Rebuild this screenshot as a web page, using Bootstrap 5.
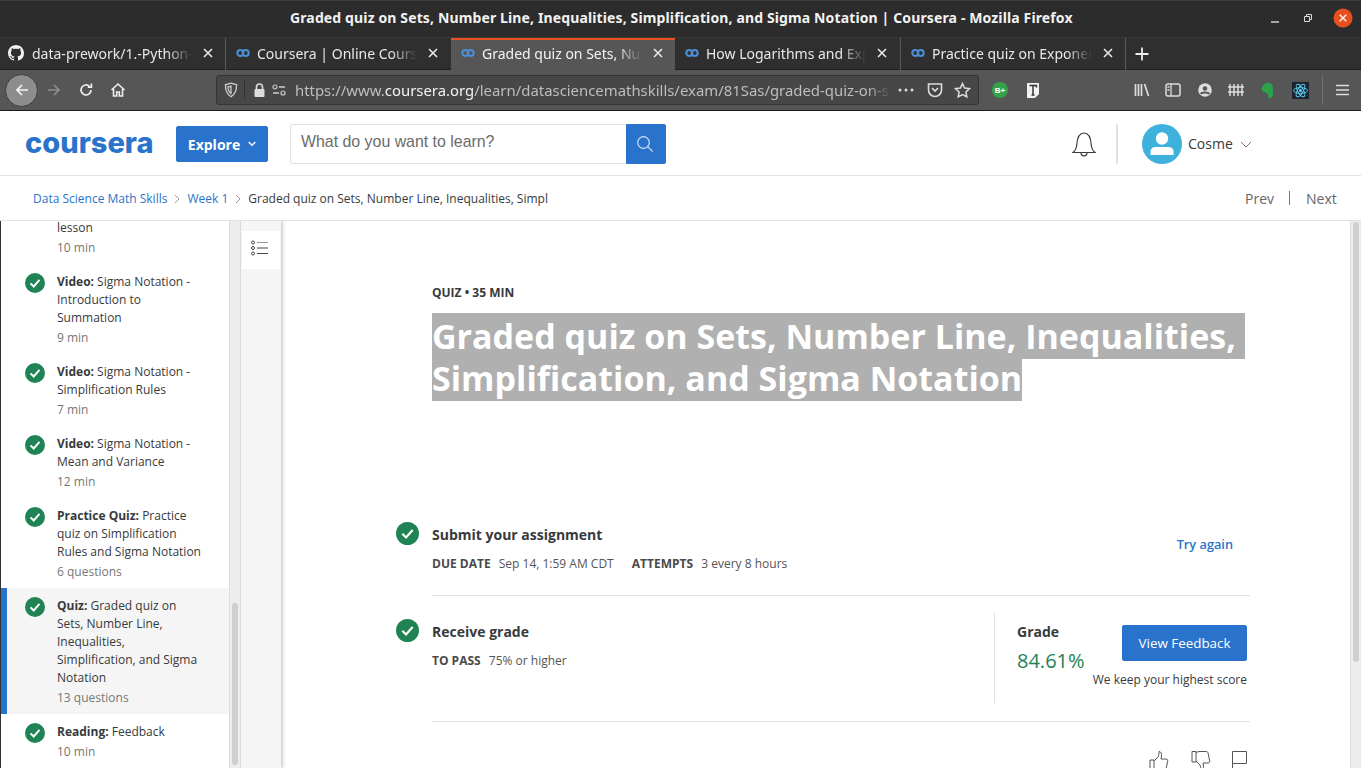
<!DOCTYPE html>
<html lang="en">
<head>
  <meta charset="utf-8"/>
  <title>Graded quiz on Sets, Number Line, Inequalities, Simplification, and Sigma Notation | Coursera</title>
  <link href="https://cdn.jsdelivr.net/npm/bootstrap@5.3.0/dist/css/bootstrap.min.css" rel="stylesheet"/>
  <style>
    html, body { height: 768px; overflow: hidden; }
    body { font-family: "Open Sans", sans-serif; color: #373a3c; background: #fff; }
    svg { display: block; flex: none; }

    /* firefox chrome */
    .ff-title { height: 37px; padding-bottom: 3px; background: #2c2c2c; border-top: 1px solid #3c3c3c; color: #f2f2f2; font: 700 14px "Noto Sans", sans-serif; }
    .ff-title-text { width: 782px; margin-left: 290px; white-space: nowrap; letter-spacing: .13px; flex: none; }
    .win-min { margin-left: 198px; }
    .win-max { margin-left: 23px; }
    .win-close { margin-left: 20px; }
    .ff-tabs { height: 33px; background: #2f2f2f; border-top: 1px solid #3a3a3a; border-bottom: 1px solid #1f1f1f; color: #e8e8e8; font: 400 14px "Noto Sans", sans-serif; }
    .ff-tab { width: 225px; height: 32px; padding: 0 0 2px 10px; flex: none; }
    .ff-tab.is-first { padding-left: 8px; }
    .ff-tab + .ff-tab { border-left: 1px solid #5a5a5a; }
    .ff-tab.is-active { background: #565656; border-top: 2px solid #e8501f; border-left: 0; color: #f4f4f4; margin-left: 1px; width: 224px; padding-bottom: 4px; }
    .ff-tab.is-active + .ff-tab { border-left: 0; }
    .ff-tab-name { width: 160px; margin-left: 7px; overflow: hidden; white-space: nowrap; -webkit-mask-image: linear-gradient(90deg, #000 84%, transparent); mask-image: linear-gradient(90deg, #000 84%, transparent); }
    .is-first .ff-tab-name { margin-left: 8px; }
    .ff-tab-close { margin-left: 10px; }
    .ff-plus { width: 32px; height: 32px; border-left: 1px solid #5a5a5a; justify-content: center; }
    .ff-tools { height: 41px; background: #565656; border-bottom: 1px solid #1c1c1c; padding-left: 5px; }
    .ff-back { width: 33px; height: 33px; border-radius: 50%; background: #8d8d8d; border: 1px solid #3e3e3e; justify-content: center; }
    .ff-slot { width: 32px; justify-content: center; }
    .ff-url { width: 763px; height: 30px; margin-left: 82px; background: #474747; border: 1px solid #343434; border-radius: 3px; color: #bdbdbd; font: 400 14.9px "Noto Sans", sans-serif; }
    .ff-url b { font-weight: 400; color: #f2f2f2; }
    .ff-url-text { width: 596px; overflow: hidden; white-space: nowrap; margin-left: 9px; -webkit-mask-image: linear-gradient(90deg, #000 96%, transparent); mask-image: linear-gradient(90deg, #000 96%, transparent); }
    .ff-url-sep { width: 1px; height: 20px; background: #333; margin: 0 7px 0 6px; }
    .ff-vsep { width: 1px; height: 30px; background: #707070; margin: 0 13px 0 13px; }
    .url-shield { margin-left: 7px; }
    .url-lock { margin-left: 1px; }
    .url-perm { margin-left: 6px; }
    .url-dots { margin-left: 7px; }
    .url-pocket { margin-left: 13px; }
    .url-star { margin-left: 11px; }
    .ext-bplus { margin-left: 13px; }
    .ext-t { margin-left: 18px; }
    .tb-library { margin-left: 94px; }
    .tb-sidebar { margin-left: 15px; }
    .tb-account { margin-left: 17px; }
    .tb-grid { margin-left: 16px; }
    .tb-note { margin-left: 16px; }
    .tb-react { margin-left: 17px; }

    /* coursera header */
    .site-head { height: 65px; border-bottom: 1px solid #e1e1e1; padding: 2px 0 0 25px; }
    .site-logo { width: 151px; color: #2a73cc; font: 800 29px/1 Inter, sans-serif; letter-spacing: 0; padding-bottom: 4px; }
    .btn-explore { width: 92px; height: 36px; padding: 0; background: #2a73cc; border-color: #2a73cc; border-radius: 2px; font-size: 14px; font-weight: 700; color: #fff; }
    .site-search { width: 376px; height: 40px; margin-left: 22px; flex: none; }
    .site-search .form-control { height: 40px; border: 1px solid #e1e1e1; border-radius: 2px 0 0 2px; padding: 0 10px 5px; font: 400 15.9px "Liberation Sans", sans-serif; color: #555; box-shadow: none; }
    .site-search .form-control::placeholder { color: #6b6b6b; opacity: 1; }
    .site-search .btn { width: 40px; padding: 0 2px 0 0; background: #2a73cc; border-color: #2a73cc; border-radius: 0 2px 2px 0; }
    .head-bell { margin-left: 406px; }
    .head-sep { width: 2px; height: 40px; background: #e1e1e1; margin: 0 24px 0 20px; }
    .head-avatar { width: 40px; height: 40px; border-radius: 50%; background: #3eb1dc; overflow: hidden; }
    .head-user { font-size: 14px; margin: 0 7px 2px 6px; letter-spacing: .05px; }

    .crumb-row { height: 45px; border-bottom: 1px solid #e1e1e1; padding: 2px 0 0 33px; font-size: 12px; }
    .crumb-row a { color: #2a73cc; text-decoration: none; }
    .crumb-gap { margin: 0 6.5px; }
    .crumb-nav { margin-left: auto; width: 116px; font-size: 14px; color: #666; padding-bottom: 2px; }
    .crumb-nav i { width: 1px; height: 14px; background: #777; margin: 0 16px 0 15px; }

    /* lesson list */
    .page-body { height: 547px; overflow: hidden; }
    .side-col { width: 229px; flex: none; overflow: hidden; border-left: 1px solid #333; }
    .side-list { margin-top: -3px; }
    .side-item { padding: 8px 16px 8px 24px; font-size: 12px; line-height: 18px; }
    .side-item.is-clipped { padding-top: 0; }
    .side-item b { font-weight: 700; }
    .side-item.is-current { background: #f5f5f5; border-left: 6px solid #2a73cc; padding-left: 18px; }
    .side-item .side-text { margin: 0 0 -1px 12px; padding-top: 1px; width: 147px; }
    .side-spacer { width: 20px; flex: none; }
    .side-time { margin-top: 2px; color: #777; }
    .check-dot { border-radius: 50%; background: #1f8354; flex: none; align-items: center; justify-content: center; }
    .side-item .check-dot { width: 20px; height: 20px; margin-top: 1px; }
    .side-bar { width: 12px; flex: none; background: #eeedec; border-left: 1px solid #dcdcdc; border-right: 1px solid #dcdcdc; padding: 382px 2px 0; }
    .side-bar div { height: 162px; border-radius: 4px; background: #cfcfcf; }
    .toc-col { width: 40px; flex: none; background: #f5f5f5; padding-top: 10px; box-shadow: 2px 0 3px rgba(0,0,0,.2); position: relative; }
    .toc-tile { height: 38px; background: #fff; margin: 0 1px; padding: 0 3px 4px 0; justify-content: center; }

    /* quiz pane */
    .quiz-col { flex: 1 1 auto; padding-left: 151px; overflow: hidden; }
    .quiz-kicker { margin-top: 63px; font-size: 12px; font-weight: 700; line-height: 18px; }
    .quiz-title { margin: 13px 0 0; width: 818px; font-size: 34px; font-weight: 700; line-height: 42px; color: #fff; white-space: nowrap; }
    .quiz-title span { background: #b0b0b0; }
    .quiz-step { position: relative; width: 818px; }
    .quiz-step .check-dot { width: 23px; height: 23px; position: absolute; left: -36px; }
    .step-one { margin-top: 121px; height: 76px; border-bottom: 1px solid #e1e1e1; padding-top: 5px; }
    .step-one .check-dot { top: 2px; }
    .step-head { font-size: 14px; font-weight: 700; line-height: 20px; }
    .step-meta { font-size: 12px; line-height: 18px; color: #555; margin-top: 10px; }
    .step-meta b { color: #4a4a4a; font-weight: 700; margin-right: 5px; }
    .step-meta .meta-second { margin-left: 15px; }
    .try-link { position: absolute; right: 17px; top: 15px; font-size: 12.75px; font-weight: 600; color: #2a73cc; text-decoration: none; }
    .step-two { height: 126px; border-bottom: 1px solid #e1e1e1; padding-top: 17px; }
    .step-two .check-dot { top: 23px; }
    .step-two-text { padding-top: 9px; }
    .grade-box { margin-left: auto; width: 256px; height: 90px; border-left: 1px solid #e1e1e1; position: relative; padding: 9px 0 0 22px; }
    .grade-num { color: #1f8354; font-size: 20px; line-height: 28px; margin-top: 5px; }
    .btn-feedback { position: absolute; left: 127px; top: 12px; width: 125px; height: 36px; padding: 0; border-radius: 2px; background: #2a73cc; border-color: #2a73cc; font-size: 13.4px; font-weight: 400; }
    .grade-note { position: absolute; right: 3px; top: 58px; font-size: 12px; line-height: 18px; white-space: nowrap; }
    .vote-row { width: 818px; padding: 29px 3px 0 0; }
    .vote-down { margin-left: 22px; }
    .vote-flag { margin-left: 21px; }
    .page-bar { width: 11px; flex: none; background: #eeedec; border-left: 1px solid #dcdcdc; padding: 1px 2px 0; }
    .page-bar div { height: 440px; border-radius: 4px; background: #cfcfcf; }
  </style>
</head>
<body>

<svg width="0" height="0" class="position-absolute">
  <symbol id="cs-fav" viewBox="0 0 16 16"><circle cx="4.9" cy="8" r="3.4" fill="none" stroke="#4b8fd6" stroke-width="2.4"/><circle cx="11.1" cy="8" r="3.4" fill="none" stroke="#4b8fd6" stroke-width="2.4"/></symbol>
  <symbol id="tab-x" viewBox="0 0 12 12"><path d="M2 2l8 8M10 2l-8 8" stroke="#e8e8e8" stroke-width="1.6" fill="none"/></symbol>
  <symbol id="ok-mark" viewBox="0 0 20 20"><path d="M5.5 10.3l3.2 3.2 5.8-6.6" stroke="#fff" stroke-width="1.9" fill="none"/></symbol>
</svg>

<!-- title bar -->
<div class="ff-title d-flex align-items-center">
  <div class="ff-title-text">Graded quiz on Sets, Number Line, Inequalities, Simplification, and Sigma Notation | Coursera - Mozilla Firefox</div>
  <svg class="win-min" width="10" height="10" viewBox="0 0 10 10"><path d="M1 9h8" stroke="#ddd" stroke-width="1.4"/></svg>
  <svg class="win-max" width="10" height="10" viewBox="0 0 10 10"><path d="M1.500 3.500h5v5h-5zM3.500 3.500V1.500h5v5H6.500" stroke="#ddd" fill="none"/></svg>
  <svg class="win-close" width="20" height="20" viewBox="0 0 20 20"><circle cx="10" cy="10" r="9.5" fill="#e9501f"/><path d="M6.700 6.700l6.600 6.600M13.300 6.700l-6.600 6.600" stroke="#fff" stroke-width="1.3"/></svg>
</div>

<!-- tabs -->
<div class="ff-tabs d-flex">
  <div class="ff-tab is-first d-flex align-items-center">
    <svg width="16" height="16" viewBox="0 0 16 16"><path fill="#f0f0f0" d="M8 0C3.58 0 0 3.58 0 8c0 3.54 2.29 6.53 5.47 7.59.4.07.55-.17.55-.38 0-.19-.01-.82-.01-1.49-2.01.37-2.53-.49-2.69-.94-.09-.23-.48-.94-.82-1.13-.28-.15-.68-.52-.01-.53.63-.01 1.08.58 1.23.82.72 1.21 1.87.87 2.33.66.07-.52.28-.87.51-1.07-1.78-.2-3.64-.89-3.64-3.95 0-.87.31-1.59.82-2.15-.08-.2-.36-1.02.08-2.12 0 0 .67-.21 2.2.82.64-.18 1.32-.27 2-.27.68 0 1.36.09 2 .27 1.53-1.04 2.2-.82 2.2-.82.44 1.1.16 1.92.08 2.12.51.56.82 1.27.82 2.15 0 3.07-1.87 3.75-3.65 3.95.29.25.54.73.54 1.48 0 1.07-.01 1.93-.01 2.2 0 .21.15.46.55.38A8.013 8.013 0 0016 8c0-4.42-3.58-8-8-8z"/></svg>
    <div class="ff-tab-name">data-prework/1.-Python-Pre</div>
    <svg class="ff-tab-close" width="12" height="12"><use href="#tab-x"/></svg>
  </div>
  <div class="ff-tab d-flex align-items-center">
    <svg width="14" height="14"><use href="#cs-fav"/></svg>
    <div class="ff-tab-name">Coursera | Online Courses</div>
    <svg class="ff-tab-close" width="12" height="12"><use href="#tab-x"/></svg>
  </div>
  <div class="ff-tab is-active d-flex align-items-center">
    <svg width="14" height="14"><use href="#cs-fav"/></svg>
    <div class="ff-tab-name">Graded quiz on Sets, Number</div>
    <svg class="ff-tab-close" width="12" height="12"><use href="#tab-x"/></svg>
  </div>
  <div class="ff-tab d-flex align-items-center">
    <svg width="14" height="14"><use href="#cs-fav"/></svg>
    <div class="ff-tab-name">How Logarithms and Exponents</div>
    <svg class="ff-tab-close" width="12" height="12"><use href="#tab-x"/></svg>
  </div>
  <div class="ff-tab d-flex align-items-center">
    <svg width="14" height="14"><use href="#cs-fav"/></svg>
    <div class="ff-tab-name">Practice quiz on Exponents</div>
    <svg class="ff-tab-close" width="12" height="12"><use href="#tab-x"/></svg>
  </div>
  <div class="ff-plus d-flex align-items-center">
    <svg width="16" height="16" viewBox="0 0 16 16"><path d="M8 1.500v13M1.500 8h13" stroke="#eee" stroke-width="1.8"/></svg>
  </div>
</div>

<!-- toolbar -->
<div class="ff-tools d-flex align-items-center">
  <div class="ff-back d-flex align-items-center">
    <svg width="16" height="16" viewBox="0 0 16 16"><path d="M14 8H3M8 3L3 8l5 5" stroke="#f4f4f4" stroke-width="1.7" fill="none"/></svg>
  </div>
  <div class="ff-slot d-flex">
    <svg width="16" height="16" viewBox="0 0 16 16"><path d="M2 8h11M8 3l5 5-5 5" stroke="#8e8e8e" stroke-width="1.7" fill="none"/></svg>
  </div>
  <div class="ff-slot d-flex">
    <svg width="16" height="16" viewBox="0 0 16 16"><path d="M13 8a5 5 0 1 1-1.600-3.700M13.400 1.500v3.600H9.800" stroke="#eee" stroke-width="1.7" fill="none"/></svg>
  </div>
  <div class="ff-slot d-flex">
    <svg width="16" height="16" viewBox="0 0 16 16"><path d="M1.500 8L8 2l6.500 6M3.500 7v7h3.200v-4h2.600v4h3.200V7" stroke="#eee" stroke-width="1.6" fill="none"/></svg>
  </div>
  <div class="ff-url d-flex align-items-center">
    <svg class="url-shield" width="14" height="16" viewBox="0 0 14 16"><path d="M7 1.200l5.600 1.600c0 5-1 9.400-5.600 12C2.400 12.200 1.400 7.800 1.400 2.800zM7 4.200L4 5c0 2.600.6 4.800 3 6.400z" stroke="#ccc" stroke-width="1.3" fill="none"/></svg>
    <div class="ff-url-sep"></div>
    <svg class="url-lock" width="13" height="14" viewBox="0 0 13 14"><path d="M3.500 6V4a3 3 0 0 1 6 0v2" stroke="#ddd" stroke-width="1.6" fill="none"/><rect x="1.500" y="6" width="10" height="8" rx="1" fill="#ddd"/></svg>
    <svg class="url-perm" width="14" height="12" viewBox="0 0 14 12"><circle cx="3" cy="3" r="2" fill="none" stroke="#ccc" stroke-width="1.2"/><path d="M7 3h6M1 9h6" stroke="#ccc" stroke-width="1.4"/><circle cx="11" cy="9" r="2" fill="none" stroke="#ccc" stroke-width="1.2"/></svg>
    <div class="ff-url-text">https://www.<b>coursera.org</b>/learn/datasciencemathskills/exam/81Sas/graded-quiz-on-sets</div>
    <svg class="url-dots" width="16" height="4" viewBox="0 0 16 4"><circle cx="2" cy="2" r="1.5" fill="#ddd"/><circle cx="8" cy="2" r="1.5" fill="#ddd"/><circle cx="14" cy="2" r="1.5" fill="#ddd"/></svg>
    <svg class="url-pocket" width="16" height="16" viewBox="0 0 16 16"><path d="M1.500 2h13v6a6.500 6.500 0 0 1-13 0zM5 6l3 3 3-3" stroke="#ddd" stroke-width="1.6" fill="none"/></svg>
    <svg class="url-star" width="17" height="17" viewBox="0 0 17 17"><path d="M8.500 1.500l2.100 4.500 4.900.6-3.600 3.400.9 4.900-4.300-2.400-4.300 2.400.9-4.900-3.600-3.400 4.900-.6z" stroke="#ddd" stroke-width="1.5" fill="none"/></svg>
  </div>
  <svg class="ext-bplus" width="16" height="16" viewBox="0 0 16 16"><circle cx="8" cy="8" r="8" fill="#35a24a"/><text x="8" y="11" text-anchor="middle" font-family="Liberation Sans" font-weight="700" font-size="8" fill="#fff">B+</text></svg>
  <svg class="ext-t" width="14" height="17" viewBox="0 0 14 17"><path d="M1 1h12v11l-4 4H1z" fill="#f2f2f2"/><path d="M3.500 3.500h7v2M7 3.500V13M5.500 13h3" stroke="#333" stroke-width="1.5" fill="none"/></svg>
  <svg class="tb-library" width="16" height="14" viewBox="0 0 16 14"><path d="M1.500 1v12M4.500 1v12M7.500 1v12M10.500 1l4 12" stroke="#ddd" stroke-width="1.7" fill="none"/></svg>
  <svg class="tb-sidebar" width="16" height="14" viewBox="0 0 16 14"><rect x="1" y="1" width="14" height="12" rx="2" fill="none" stroke="#ddd" stroke-width="1.5"/><path d="M6 1v12M2.500 4h2M2.500 7h2" stroke="#ddd" stroke-width="1.3"/></svg>
  <svg class="tb-account" width="14" height="14" viewBox="0 0 14 14"><circle cx="7" cy="7" r="6.800" fill="#ddd"/><circle cx="7" cy="5.500" r="2.300" fill="#565656"/><path d="M2.800 11c1-2 7.400-2 8.400 0" stroke="#565656" stroke-width="1.8" fill="none"/></svg>
  <svg class="tb-grid" width="16" height="14" viewBox="0 0 16 14"><path d="M2 1v12M6 1v12M10 1v12M14 1v12M0 4h16M0 9h16" stroke="#ddd" stroke-width="1.5"/></svg>
  <svg class="tb-note" width="15" height="17" viewBox="0 0 15 17"><path d="M3 3.500L5.500 1c2.500-.6 6 .2 6.800 2 1 3 1 8 .4 11-.5 2-3.700 2.700-4.700 1-.6-1 0-2.300 1.200-2.200-1.500-.6-3-1-3.700-2.800-2.500.3-3.600-.8-4-3.500z" fill="#2aa24a"/></svg>
  <svg class="tb-react" width="17" height="17" viewBox="0 0 17 17"><rect width="17" height="17" fill="#1b2430"/><g fill="none" stroke="#61dafb" stroke-width=".9"><ellipse cx="8.500" cy="8.500" rx="7" ry="2.800"/><ellipse cx="8.500" cy="8.500" rx="7" ry="2.800" transform="rotate(60 8.500 8.500)"/><ellipse cx="8.500" cy="8.500" rx="7" ry="2.800" transform="rotate(120 8.500 8.500)"/></g><circle cx="8.500" cy="8.500" r="1.500" fill="#61dafb"/></svg>
  <div class="ff-vsep"></div>
  <svg width="13" height="12" viewBox="0 0 13 12"><path d="M0 1.500h13M0 6h13M0 10.500h13" stroke="#ddd" stroke-width="1.7"/></svg>
</div>

<!-- coursera header -->
<header class="site-head d-flex align-items-center">
  <div class="site-logo">coursera</div>
  <button class="btn btn-primary btn-explore d-flex align-items-center justify-content-center gap-2" type="button">Explore
    <svg width="8" height="6" viewBox="0 0 8 6"><path d="M.7 1L4 4.300 7.300 1" stroke="#fff" stroke-width="1.3" fill="none"/></svg>
  </button>
  <div class="input-group site-search">
    <input class="form-control" type="text" placeholder="What do you want to learn?"/>
    <button class="btn btn-primary d-flex align-items-center justify-content-center" type="button" aria-label="Search">
      <svg width="18" height="18" viewBox="0 0 18 18"><circle cx="7.500" cy="7.500" r="5.800" fill="none" stroke="#cfe0f5" stroke-width="1.2"/><path d="M11.700 11.700l5 5" stroke="#cfe0f5" stroke-width="1.2"/></svg>
    </button>
  </div>
  <svg class="head-bell" width="24" height="25" viewBox="0 0 24 25"><path d="M1 20.500h22c-2.500-2-3.500-4-3.800-8C18.800 6 16.500 1 12 1S5.200 6 4.800 12.500c-.3 4-1.300 6-3.800 8zM9 20.500c0 4.500 6 4.500 6 0" fill="none" stroke="#3c3c3c" stroke-width="1.2"/></svg>
  <div class="head-sep"></div>
  <div class="head-avatar">
    <svg width="40" height="40" viewBox="0 0 40 40"><circle cx="20" cy="14.500" r="6.200" fill="#fff"/><path d="M8.500 31v-3.500c0-3 2-4.500 5-4.500h13c3 0 5 1.500 5 4.500V31z" fill="#fff"/></svg>
  </div>
  <div class="head-user">Cosme</div>
  <svg width="12" height="7" viewBox="0 0 12 7"><path d="M1 1l5 5 5-5" stroke="#777" stroke-width="1" fill="none"/></svg>
</header>

<!-- breadcrumb -->
<div class="crumb-row d-flex align-items-center">
  <nav class="d-flex align-items-center">
    <a href="#">Data Science Math Skills</a>
    <svg class="crumb-gap" width="7" height="10" viewBox="0 0 7 10"><path d="M1 1l4 4-4 4" stroke="#999" fill="none"/></svg>
    <a href="#">Week 1</a>
    <svg class="crumb-gap" width="7" height="10" viewBox="0 0 7 10"><path d="M1 1l4 4-4 4" stroke="#999" fill="none"/></svg>
    <span>Graded quiz on Sets, Number Line, Inequalities, Simpl</span>
  </nav>
  <div class="crumb-nav d-flex align-items-center"><span>Prev</span><i></i><span>Next</span></div>
</div>

<div class="page-body d-flex">
  <!-- lesson list -->
  <aside class="side-col">
    <div class="side-list">
      <div class="side-item is-clipped d-flex">
        <div class="side-spacer"></div>
        <div class="side-text">lesson<div class="side-time">10 min</div></div>
      </div>
      <div class="side-item d-flex">
        <div class="check-dot d-flex"><svg width="20" height="20"><use href="#ok-mark"/></svg></div>
        <div class="side-text"><b>Video:</b> Sigma Notation - Introduction to Summation<div class="side-time">9 min</div></div>
      </div>
      <div class="side-item d-flex">
        <div class="check-dot d-flex"><svg width="20" height="20"><use href="#ok-mark"/></svg></div>
        <div class="side-text"><b>Video:</b> Sigma Notation - Simplification Rules<div class="side-time">7 min</div></div>
      </div>
      <div class="side-item d-flex">
        <div class="check-dot d-flex"><svg width="20" height="20"><use href="#ok-mark"/></svg></div>
        <div class="side-text"><b>Video:</b> Sigma Notation - Mean and Variance<div class="side-time">12 min</div></div>
      </div>
      <div class="side-item d-flex">
        <div class="check-dot d-flex"><svg width="20" height="20"><use href="#ok-mark"/></svg></div>
        <div class="side-text"><b>Practice Quiz:</b> Practice quiz on Simplification Rules and Sigma Notation<div class="side-time">6 questions</div></div>
      </div>
      <div class="side-item is-current d-flex">
        <div class="check-dot d-flex"><svg width="20" height="20"><use href="#ok-mark"/></svg></div>
        <div class="side-text"><b>Quiz:</b> Graded quiz on Sets, Number Line, Inequalities, Simplification, and Sigma Notation<div class="side-time">13 questions</div></div>
      </div>
      <div class="side-item d-flex">
        <div class="check-dot d-flex"><svg width="20" height="20"><use href="#ok-mark"/></svg></div>
        <div class="side-text"><b>Reading:</b> Feedback<div class="side-time">10 min</div></div>
      </div>
    </div>
  </aside>
  <div class="side-bar"><div></div></div>
  <div class="toc-col">
    <div class="toc-tile d-flex align-items-center">
      <svg width="17" height="16" viewBox="0 0 17 16"><g fill="none" stroke="#444"><circle cx="2" cy="2.500" r="1.500"/><circle cx="2" cy="8" r="1.500"/><circle cx="2" cy="13.500" r="1.500"/></g><path d="M6 2.500h11" stroke="#999"/><path d="M6 8h11M6 13.500h11" stroke="#444"/></svg>
    </div>
  </div>

  <!-- quiz pane -->
  <main class="quiz-col">
    <div class="quiz-kicker">QUIZ • 35 MIN</div>
    <h1 class="quiz-title"><span>Graded quiz on Sets, Number Line, Inequalities,&nbsp;</span><br><span>Simplification, and Sigma Notation</span></h1>

    <div class="quiz-step step-one">
      <div class="check-dot d-flex"><svg width="23" height="23" viewBox="0 0 20 20"><use href="#ok-mark"/></svg></div>
      <div class="step-head">Submit your assignment</div>
      <div class="step-meta"><b>DUE DATE</b> Sep 14, 1:59 AM CDT <b class="meta-second">ATTEMPTS</b> 3 every 8 hours</div>
      <a class="try-link" href="#">Try again</a>
    </div>

    <div class="quiz-step step-two d-flex">
      <div class="check-dot d-flex"><svg width="23" height="23" viewBox="0 0 20 20"><use href="#ok-mark"/></svg></div>
      <div class="step-two-text">
        <div class="step-head">Receive grade</div>
        <div class="step-meta"><b>TO PASS</b> 75% or higher</div>
      </div>
      <div class="grade-box">
        <div class="step-head">Grade</div>
        <div class="grade-num">84.61%</div>
        <button class="btn btn-primary btn-feedback" type="button">View Feedback</button>
        <div class="grade-note">We keep your highest score</div>
      </div>
    </div>

    <div class="vote-row d-flex justify-content-end">
      <svg width="20" height="20" viewBox="0 0 20 20"><path d="M1 9h4v10.500H1zM5 10l4-4c1-2 1-4 1-5.500 2 0 3 2.500 2.500 4.500L12 8h5c2 0 2 2 1.500 3L17 18c0 1-1 1.500-2 1.500H8L5 18.500" fill="none" stroke="#555"/></svg>
      <svg class="vote-down" width="20" height="20" viewBox="0 0 20 20"><path d="M1 11h4V.5H1zM5 10l4 4c1 2 1 4 1 5.500 2 0 3-2.500 2.500-4.500L12 12h5c2 0 2-2 1.500-3L17 2c0-1-1-1.500-2-1.500H8L5 1.500" fill="none" stroke="#555"/></svg>
      <svg class="vote-flag" width="15" height="20" viewBox="0 0 15 20"><path d="M.5 20V.5h14v12H.5" fill="none" stroke="#555"/></svg>
    </div>
  </main>
  <div class="page-bar"><div></div></div>
</div>

<script src="https://cdn.jsdelivr.net/npm/bootstrap@5.3.0/dist/js/bootstrap.bundle.min.js"></script>
</body>
</html>
